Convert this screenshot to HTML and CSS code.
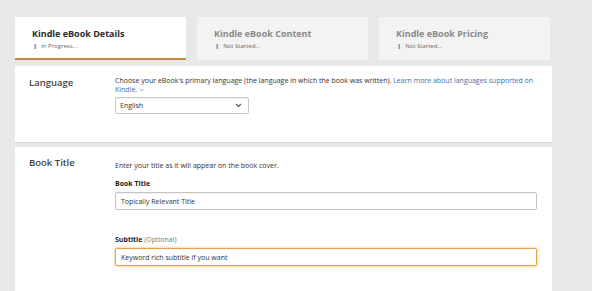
FILE: index.html
```html
<!DOCTYPE html>
<html>
<head>
<meta charset="utf-8">
<link rel="stylesheet" href="styles.css">
</head>
<body>
<div class="page">
  <div class="tabs">
    <div class="tab active">
      <div class="tab-title">Kindle eBook Details</div>
      <div class="tab-status"><span class="info">i</span>In Progress...</div>
    </div>
    <div class="tab">
      <div class="tab-title">Kindle eBook Content</div>
      <div class="tab-status"><span class="info">i</span>Not Started...</div>
    </div>
    <div class="tab">
      <div class="tab-title">Kindle eBook Pricing</div>
      <div class="tab-status"><span class="info">i</span>Not Started...</div>
    </div>
  </div>

  <div class="panel panel-lang">
    <div class="label">Language</div>
    <div class="content">
      <p class="desc">Choose your eBook's primary language (the language in which the book was written). <a class="link">Learn more about languages supported on Kindle.</a> <svg class="caret" width="5" height="4" viewBox="0 0 5 4"><path d="M0.7 1 L2.5 2.8 L4.3 1" fill="none" stroke="#8a8a8a" stroke-width="0.8"/></svg></p>
      <div class="select"><span>English</span><svg width="7" height="5" viewBox="0 0 7 5"><path d="M1 1 L3.5 3.5 L6 1" fill="none" stroke="#555" stroke-width="1.2"/></svg></div>
    </div>
  </div>

  <div class="panel panel-title">
    <div class="label">Book Title</div>
    <div class="content">
      <p class="desc">Enter your title as it will appear on the book cover.</p>
      <div class="field-label">Book Title</div>
      <div class="input">Topically Relevant Title</div>
      <div class="field-label sub">Subtitle <span class="opt">(Optional)</span></div>
      <div class="input focus">Keyword rich subtitle if you want</div>
    </div>
  </div>
</div>
</body>
</html>
```

FILE: styles.css
```css
html, body {
  margin: 0;
  padding: 0;
  background: #e8e8e8;
  font-family: "Open Sans", "Noto Sans", sans-serif;
  color: #333;
}
.page {
  padding: 17px 40px 0 15px;
  height: 291px;
  box-sizing: border-box;
  overflow: hidden;
}
.tabs {
  display: flex;
  gap: 11px;
}
.tab {
  width: 171px;
  height: 43px;
  box-sizing: border-box;
  background: #f3f3f3;
  padding: 10px 0 0 17px;
}
.tab.active {
  background: #fff;
  border-bottom: 2px solid #c58545;
}
.tab-title {
  font-size: 9px;
  font-weight: 700;
  line-height: 13px;
  color: #8a8a8a;
}
.tab.active .tab-title {
  color: #2b2b2b;
}
.tab-status {
  margin-top: 2px;
  font-size: 6px;
  line-height: 9px;
  color: #666;
  display: flex;
  align-items: center;
}
.info {
  color: #3a78b5;
  font-weight: 700;
  font-size: 7px;
  margin-right: 5px;
  margin-left: 2px;
}
.panel {
  background: #fff;
  display: flex;
  padding: 0 15px 0 14px;
  box-shadow: 0 1px 0 #d8d8d8;
}
.panel-lang {
  margin-top: 6px;
  height: 76px;
  box-sizing: border-box;
  padding-top: 10px;
}
.panel-title {
  margin-top: 5px;
  padding-top: 9px;
  height: 200px;
  box-sizing: border-box;
}
.label {
  width: 86px;
  flex: none;
  margin-top: 2px;
  font-size: 9.5px;
  font-weight: 600;
  color: #444;
  line-height: 10px;
}
.content {
  flex: 1;
}
.desc {
  margin: 0;
  font-size: 7px;
  line-height: 9px;
  color: #333;
}
.panel-title .desc {
  margin-top: 5px;
}
.link {
  color: #3f6fa8;
}
.caret {
  vertical-align: middle;
}
.select {
  margin-top: 3px;
  width: 134px;
  height: 17px;
  box-sizing: border-box;
  border: 1px solid #c8c8c8;
  border-radius: 2px;
  display: flex;
  align-items: center;
  justify-content: space-between;
  padding: 0 6px 0 4px;
  font-size: 7px;
  background: #fff;
  box-shadow: inset 0 1px 1px rgba(0,0,0,0.06);
}
.field-label {
  margin-top: 9px;
  font-size: 7px;
  font-weight: 700;
  line-height: 10px;
  color: #222;
}
.field-label.sub {
  margin-top: 25px;
}
.opt {
  font-weight: 400;
  color: #777;
}
.input {
  margin-top: 3px;
  width: 422px;
  height: 18px;
  box-sizing: border-box;
  border: 1px solid #c4c4c4;
  border-radius: 2px;
  font-size: 7px;
  display: flex;
  align-items: center;
  padding-left: 5px;
  box-shadow: inset 0 1px 1px rgba(0,0,0,0.06);
}
.input.focus {
  border-color: #e8a24c;
  box-shadow: 0 0 2px 1px rgba(240, 170, 90, 0.45);
}
```
